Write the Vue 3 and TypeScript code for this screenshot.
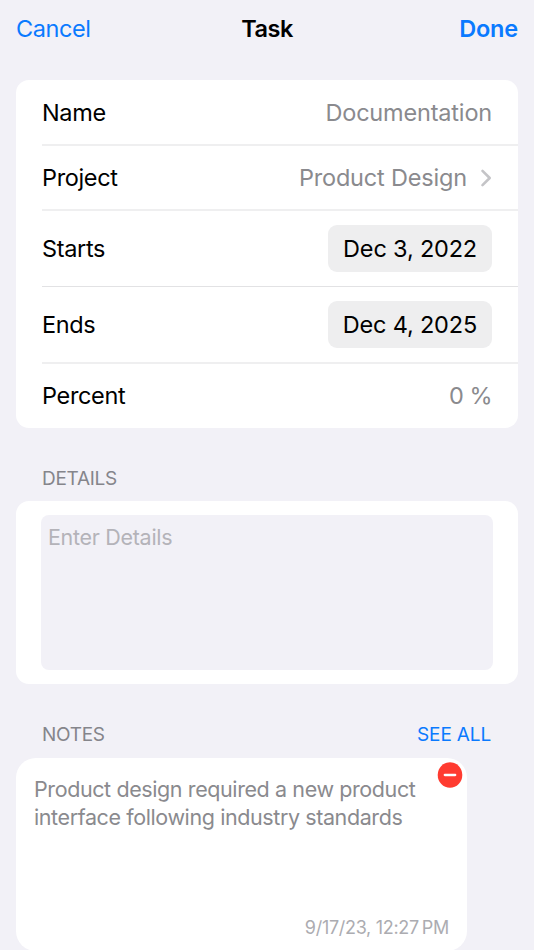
<script setup lang="ts">
interface Row {
  label: string
  value: string
  kind: 'text' | 'link' | 'date' | 'percent'
}

const rows: Row[] = [
  { label: 'Name', value: 'Documentation', kind: 'text' },
  { label: 'Project', value: 'Product Design', kind: 'link' },
  { label: 'Starts', value: 'Dec 3, 2022', kind: 'date' },
  { label: 'Ends', value: 'Dec 4, 2025', kind: 'date' },
  { label: 'Percent', value: '0 %', kind: 'percent' },
]
</script>

<template>
  <main class="screen">
    <header class="nav">
      <button class="action cancel">Cancel</button>
      <h1 class="title">Task</h1>
      <button class="action done">Done</button>
    </header>

    <section class="card form">
      <div v-for="row in rows" :key="row.label" class="row" :class="row.kind">
        <span class="label">{{ row.label }}</span>
        <span class="value">{{ row.value }}</span>
        <svg v-if="row.kind === 'link'" class="chevron" viewBox="0 0 12 20">
          <path d="M2.5 2.8l7.2 7.2-7.2 7.2" />
        </svg>
      </div>
    </section>

    <h2 class="heading details-heading">DETAILS</h2>
    <section class="card details">
      <textarea class="input" placeholder="Enter Details"></textarea>
    </section>

    <div class="notes-head">
      <h2 class="heading">NOTES</h2>
      <button class="see-all">SEE ALL</button>
    </div>
    <article class="note">
      <p class="body">Product design required a new product<br />interface following industry standards</p>
      <time class="time">9/17/23, 12:27&#8239;PM</time>
      <button class="remove" aria-label="Remove note">
        <svg viewBox="0 0 26 26">
          <ellipse cx="13" cy="13" rx="12.3" ry="12.8" />
          <path d="M7.8 13h10.4" />
        </svg>
      </button>
    </article>
  </main>
</template>

<style>
body {
  background: #f2f1f7;
}
</style>

<style scoped>
.screen {
  box-sizing: border-box;
  width: 534px;
  height: 950px;
  padding: 0 16px;
  overflow: hidden;
  background: #f2f1f7;
  font-family: Inter, sans-serif;
  font-size: 23.5px;
  line-height: 28px;
  color: #000;
}
button {
  padding: 0;
  border: 0;
  background: none;
  font: inherit;
  color: #0a7aff;
}
h1, h2, p {
  margin: 0;
  font: inherit;
}
.nav {
  display: grid;
  grid-template-columns: 1fr auto 1fr;
  align-items: center;
  height: 58px;
}
.cancel {
  justify-self: start;
  letter-spacing: -0.4px;
}
.done {
  justify-self: end;
  font-weight: 600;
  letter-spacing: -0.2px;
}
.title {
  font-weight: 600;
  letter-spacing: -0.5px;
}
.card {
  border-radius: 13px;
  background: #fff;
}
.form {
  margin-top: 22px;
  height: 348px;
}
.row {
  display: flex;
  align-items: center;
  box-sizing: border-box;
  height: 65px;
  margin-left: 26px;
  padding-right: 26px;
  border-bottom: 2px solid #efeff0;
  letter-spacing: -0.35px;
}
.text {
  height: 66px;
  padding-top: 2px;
}
.link {
  padding-top: 1px;
}
.date {
  height: 77px;
}
.link + .date {
  height: 76px;
  border-bottom: 1px solid #e2e2e4;
}
.percent {
  height: 64px;
  padding-bottom: 1px;
  border-bottom: 0;
}
.value {
  margin-left: auto;
  color: #8a8a8e;
  letter-spacing: -0.18px;
}
.percent .value {
  letter-spacing: -0.5px;
}
.date .value {
  box-sizing: border-box;
  height: 47px;
  padding: 10px 15px;
  border-radius: 9px;
  background: #eeeeef;
  color: #000;
  line-height: 27px;
}
.chevron {
  width: 12px;
  height: 20px;
  margin-left: 13px;
  fill: none;
  stroke: #c4c4c7;
  stroke-width: 2.6;
  stroke-linecap: round;
  stroke-linejoin: round;
}
.heading {
  font-size: 19px;
  line-height: 24px;
  letter-spacing: -0.3px;
  color: #85858b;
}
.details-heading {
  margin: 39px 0 10px 26px;
}
.details {
  box-sizing: border-box;
  height: 183px;
  padding: 14px 25px;
}
.input {
  display: block;
  box-sizing: border-box;
  width: 100%;
  height: 155px;
  padding: 8px 7px;
  border: 0;
  border-radius: 8px;
  outline: 0;
  resize: none;
  background: #f2f1f7;
  font: inherit;
  font-size: 21.5px;
  letter-spacing: -0.3px;
}
.input::placeholder {
  color: #b4b3b9;
}
.notes-head {
  display: flex;
  justify-content: space-between;
  margin: 39px 27px 11px 26px;
}
.see-all {
  font-size: 19px;
  line-height: 24px;
  letter-spacing: -0.15px;
}
.note {
  position: relative;
  display: flex;
  flex-direction: column;
  justify-content: space-between;
  box-sizing: border-box;
  width: 451px;
  height: 193px;
  padding: 17px 18px 11px;
  border-radius: 20px;
  background: #fff;
}
.body {
  font-size: 21.5px;
  line-height: 28.4px;
  letter-spacing: -0.4px;
  color: #8a8a8e;
  white-space: nowrap;
}
.time {
  align-self: flex-end;
  font-size: 18px;
  line-height: 24px;
  letter-spacing: -0.3px;
  color: #acacb1;
}
.remove {
  position: absolute;
  top: 4px;
  right: 4px;
  width: 26px;
  height: 26px;
}
.remove svg {
  display: block;
  fill: #ff3b30;
  stroke-width: 2.3;
  stroke-linecap: round;
}
.remove path {
  stroke: #fff;
}
</style>
